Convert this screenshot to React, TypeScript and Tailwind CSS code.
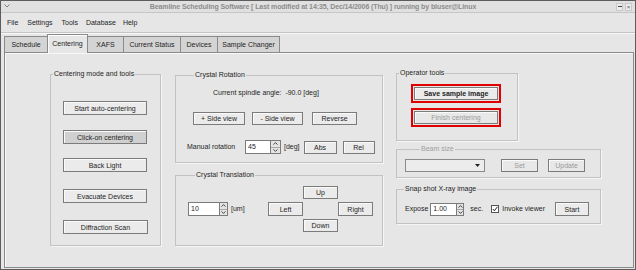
import React from "react";

const Btn = ({
  children,
  className = "",
}: {
  children: React.ReactNode;
  className?: string;
}) => (
  <button
    className={`flex items-center justify-center border border-[#7b7b7b] shadow-[inset_1px_1px_0_#fafafa] leading-none ${className}`}
  >
    {children}
  </button>
);

const Spin = ({ className = "" }: { className?: string }) => (
  <div
    className={`flex flex-col border border-l-0 border-[#7b7b7b] bg-[#e4e4e4] ${className}`}
  >
    <div className="flex flex-1 items-center justify-center border-b border-[#a8a8a8]">
      <svg width="5" height="3" viewBox="0 0 5 3">
        <path d="M0.5 2.6 L2.5 0.6 L4.5 2.6" fill="none" stroke="#333" strokeWidth="0.9" />
      </svg>
    </div>
    <div className="flex flex-1 items-center justify-center">
      <svg width="5" height="3" viewBox="0 0 5 3">
        <path d="M0.5 0.4 L2.5 2.4 L4.5 0.4" fill="none" stroke="#333" strokeWidth="0.9" />
      </svg>
    </div>
  </div>
);

const Group = ({
  label,
  legendClass,
  className,
  children,
}: {
  label: string;
  legendClass: string;
  className: string;
  children: React.ReactNode;
}) => (
  <fieldset className={`border border-[#c2c2c2] shadow-[1px_1px_0_#f6f6f6] ${className}`}>
    <legend className={`px-[1px] leading-[8px] ${legendClass}`}>{label}</legend>
    {children}
  </fieldset>
);

const tabs = [
  { name: "Schedule", w: "w-[44px]" },
  { name: "Centering", w: "w-[41px]", active: true },
  { name: "XAFS", w: "w-[37px]" },
  { name: "Current Status", w: "w-[58px]" },
  { name: "Devices", w: "w-[38px]" },
  { name: "Sample Changer", w: "w-[63px]" },
];

export default function App() {
  return (
    <div className="h-[270px] w-[636px] overflow-hidden bg-[#e6e6e6] font-['Liberation_Sans',Arial,sans-serif] text-[7px] leading-[8px] text-[#1e1e1e]">
      <div className="flex h-full flex-col border border-[#5c5c5c]">
        {/* title bar */}
        <div className="flex h-[12px] items-center border-b border-[#c6c6c6] bg-[#e0e0e0] px-[3px]">
          <svg width="6" height="4" viewBox="0 0 6 4" className="mb-[2px]">
            <path d="M0.5 0.5 L3 3 L5.5 0.5" fill="none" stroke="#777" strokeWidth="0.9" />
          </svg>
          <div className="flex-1 text-center font-bold tracking-[-0.1px] text-[#8c8c8c]">
            Beamline Scheduling Software [ Last modified at 14:35, Dec/14/2006 (Thu) ] running by bluser@Linux
          </div>
          <div className="flex gap-[2px]">
            <div className="flex h-[8px] w-[7px] items-center justify-center border border-[#c8c8c8] bg-[#ececec]">
              <div className="h-[1px] w-[4px] bg-[#444]" />
            </div>
            <div className="flex h-[8px] w-[7px] items-center justify-center border border-[#c8c8c8] bg-[#ececec] text-[6px] leading-none text-[#555]">
              ×
            </div>
          </div>
        </div>

        {/* menu bar */}
        <div className="flex h-[20px] items-center border-b border-[#c4c4c4] pl-[6px] shadow-[0_1px_0_#f8f8f8]">
          <span>File</span>
          <span className="ml-[9px]">Settings</span>
          <span className="ml-[9px]">Tools</span>
          <span className="ml-[8px]">Database</span>
          <span className="ml-[7px]">Help</span>
        </div>

        {/* tabs */}
        <div className="flex h-[19px] items-end pl-[4px]">
          {tabs.map((t) =>
            t.active ? (
              <div
                key={t.name}
                className={`relative z-10 -mb-px -ml-px flex h-[19px] items-center justify-center border border-b-0 border-[#8a8a8a] bg-[#e6e6e6] shadow-[inset_1px_1px_0_#fcfcfc] ${t.w}`}
              >
                {t.name}
              </div>
            ) : (
              <div
                key={t.name}
                className={`-ml-px flex h-[16px] items-center justify-center border border-b-0 border-[#8a8a8a] bg-[#d4d4d4] pt-[1px] ${t.w}`}
              >
                {t.name}
              </div>
            )
          )}
        </div>

        {/* tab panel */}
        <div className="mb-[1px] ml-[3px] mr-[1px] flex h-[216px] items-start border border-[#8a8a8a] shadow-[inset_1px_1px_0_#f8f8f8]">
          {/* column 1 */}
          <Group
            label="Centering mode and tools"
            legendClass="ml-[2px]"
            className="ml-[45px] mt-[17px] h-[176px] w-[111px]"
          >
            <div className="flex flex-col pl-[12px]">
              <Btn className="mt-[23px] h-[14px] w-[84px] bg-[#ebebeb]">Start auto-centering</Btn>
              <Btn className="mt-[15px] h-[14px] w-[84px] bg-[#d0d0d0]">Click-on centering</Btn>
              <Btn className="mt-[14px] h-[14px] w-[84px] bg-[#ebebeb]">Back Light</Btn>
              <Btn className="mt-[17px] h-[14px] w-[84px] bg-[#ebebeb]">Evacuate Devices</Btn>
              <Btn className="mt-[17px] h-[14px] w-[85px] bg-[#ebebeb]">Diffraction Scan</Btn>
            </div>
          </Group>

          {/* column 2 */}
          <div className="ml-[14px] mt-[18px] flex flex-col">
            <Group
              label="Crystal Rotation"
              legendClass="ml-[18px]"
              className="h-[92px] w-[208px]"
            >
              <div className="mt-[10px] whitespace-pre pl-[37px]">
                Current spindle angle:  -90.0 [deg]
              </div>
              <div className="mt-[15px] flex pl-[17px]">
                <Btn className="h-[13px] w-[52px] bg-[#ebebeb]">+ Side view</Btn>
                <Btn className="ml-[7px] h-[13px] w-[51px] bg-[#ebebeb]">- Side view</Btn>
                <Btn className="ml-[9px] h-[13px] w-[45px] bg-[#ebebeb]">Reverse</Btn>
              </div>
              <div className="mt-[15px] flex items-center pl-[11px]">
                <span className="w-[58px]">Manual rotation</span>
                <div className="flex h-[14px]">
                  <div className="flex w-[26px] items-center border border-[#7b7b7b] bg-white pl-[2px]">
                    45
                  </div>
                  <Spin className="w-[10px]" />
                </div>
                <span className="ml-[3px]">[deg]</span>
                <Btn className="ml-[4px] h-[13px] w-[33px] bg-[#ebebeb]">Abs</Btn>
                <Btn className="ml-[6px] h-[13px] w-[32px] bg-[#ebebeb]">Rel</Btn>
              </div>
            </Group>

            <Group
              label="Crystal Translation"
              legendClass="ml-[19px]"
              className="mt-[8px] h-[75px] w-[208px]"
            >
              <div className="mt-[7px] flex items-center pl-[12px]">
                <div className="flex w-[80px] items-center">
                  <div className="flex h-[14px]">
                    <div className="flex w-[32px] items-center border border-[#7b7b7b] bg-white pl-[2px]">
                      10
                    </div>
                    <Spin className="w-[8px]" />
                  </div>
                  <span className="ml-[3px]">[um]</span>
                </div>
                <div className="grid grid-cols-[35px_35px_35px] grid-rows-[13px_14px_13px] gap-y-[3px]">
                  <span />
                  <Btn className="bg-[#ebebeb]">Up</Btn>
                  <span />
                  <Btn className="bg-[#ebebeb]">Left</Btn>
                  <span />
                  <Btn className="bg-[#ebebeb]">Right</Btn>
                  <span />
                  <Btn className="bg-[#ebebeb]">Down</Btn>
                  <span />
                </div>
              </div>
            </Group>
          </div>

          {/* column 3 */}
          <div className="ml-[13px] mt-[16px] flex flex-col">
            <Group
              label="Operator tools"
              legendClass="ml-[2px]"
              className="h-[72px] w-[122px]"
            >
              <div className="pl-[14px]">
                <div className="mt-[7px] h-[19px] w-[90px] border-2 border-[#e00000] p-[1px]">
                  <Btn className="h-full w-full bg-[#ebebeb] font-bold">Save sample image</Btn>
                </div>
                <div className="mt-[5px] h-[19px] w-[90px] border-2 border-[#e00000] p-[1px]">
                  <Btn className="h-full w-full bg-[#e8e8e8] text-[#9a9a9a]">Finish centering</Btn>
                </div>
              </div>
            </Group>

            <Group
              label="Beam size"
              legendClass="ml-[23px] text-[#a0a0a0]"
              className="mt-[4px] h-[33px] w-[205px]"
            >
              <div className="mt-[6px] flex pl-[8px]">
                <div className="flex h-[13px] w-[80px] items-center justify-end border border-[#8a8a8a] bg-[#ececec] pr-[4px]">
                  <svg width="5" height="3" viewBox="0 0 5 3">
                    <path d="M0 0 L5 0 L2.5 3 Z" fill="#222" />
                  </svg>
                </div>
                <Btn className="ml-[16px] h-[13px] w-[37px] bg-[#e8e8e8] text-[#9a9a9a]">Set</Btn>
                <Btn className="ml-[10px] h-[13px] w-[37px] bg-[#e8e8e8] text-[#9a9a9a]">Update</Btn>
              </div>
            </Group>

            <Group
              label="Snap shot X-ray image"
              legendClass="ml-[7px]"
              className="mt-[7px] h-[39px] w-[205px]"
            >
              <div className="mt-[9px] flex items-center pl-[8px]">
                <span>Expose</span>
                <div className="ml-[2px] flex h-[13px]">
                  <div className="flex w-[27px] items-center border border-[#7b7b7b] bg-white pl-[2px]">
                    1.00
                  </div>
                  <Spin className="w-[7px]" />
                </div>
                <span className="ml-[6px]">sec.</span>
                <div className="ml-[8px] flex h-[8px] w-[8px] items-center justify-center border border-[#555] bg-white">
                  <svg width="6" height="6" viewBox="0 0 6 6">
                    <path d="M0.8 3 L2.4 4.8 L5.4 0.8" fill="none" stroke="#222" strokeWidth="1" />
                  </svg>
                </div>
                <span className="ml-[3px]">Invoke viewer</span>
                <Btn className="ml-[10px] h-[14px] w-[34px] bg-[#ebebeb]">Start</Btn>
              </div>
            </Group>
          </div>
        </div>
      </div>
    </div>
  );
}
